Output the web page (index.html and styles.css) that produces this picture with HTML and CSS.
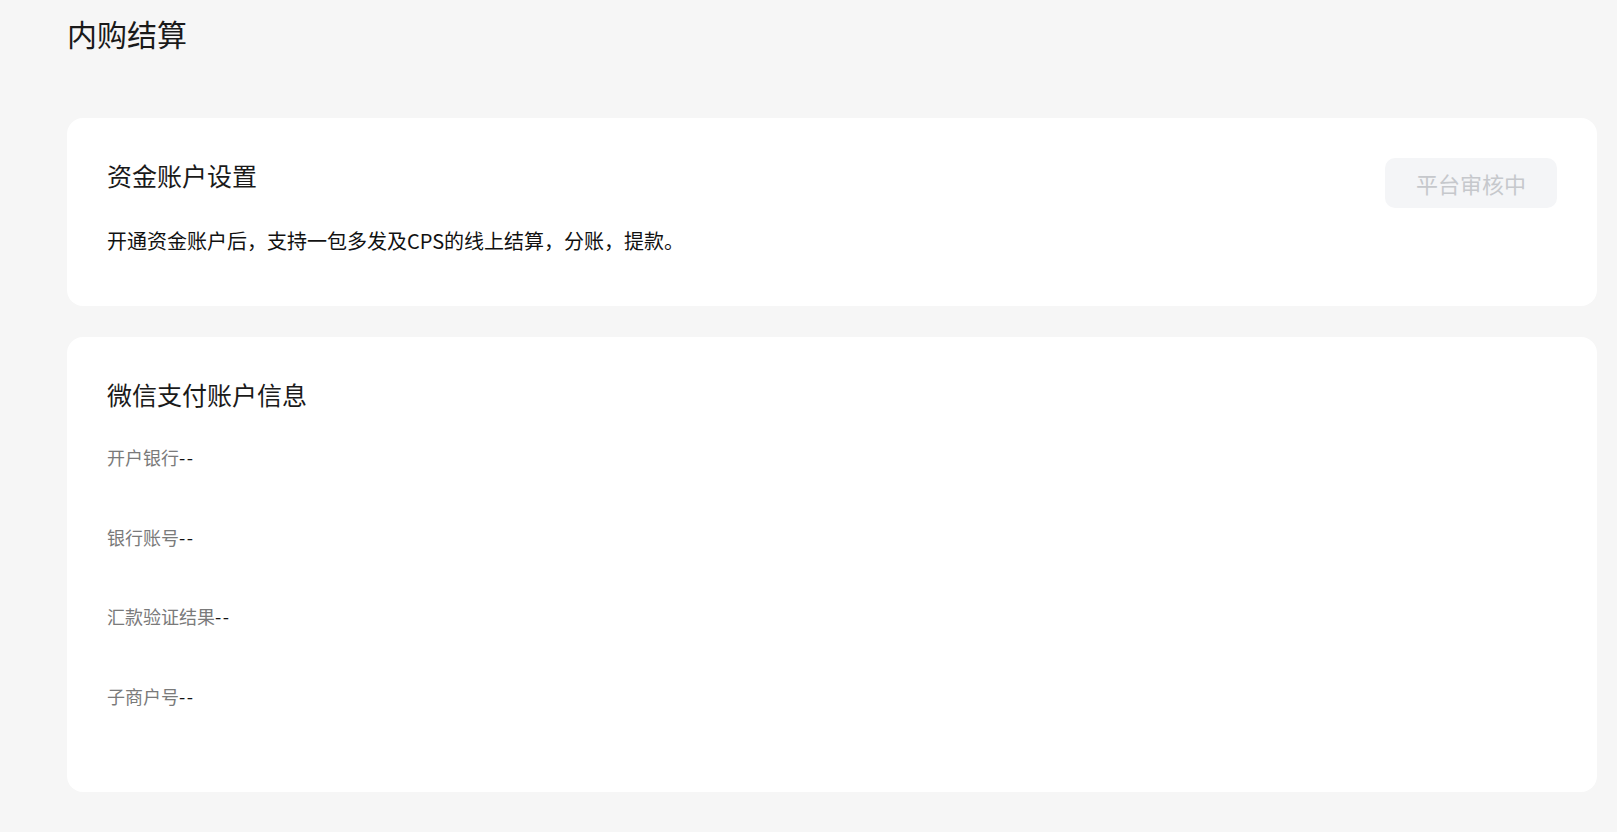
FILE: index.html
```html
<!DOCTYPE html>
<html lang="zh-CN">
<head>
<meta charset="utf-8">
<title>内购结算</title>
<link rel="stylesheet" href="styles.css">
</head>
<body>
<div class="page">
  <h1 class="page-title">内购结算</h1>

  <section class="card card-account">
    <div class="card-main">
      <h2 class="card-title">资金账户设置</h2>
      <p class="card-desc">开通资金账户后，支持一包多发及CPS的线上结算，分账，提款。</p>
    </div>
    <button class="btn-status" type="button" disabled>平台审核中</button>
  </section>

  <section class="card card-info">
    <h2 class="card-title">微信支付账户信息</h2>
    <ul class="info-list">
      <li class="info-row"><span class="info-label">开户银行</span><span class="info-value">--</span></li>
      <li class="info-row"><span class="info-label">银行账号</span><span class="info-value">--</span></li>
      <li class="info-row"><span class="info-label">汇款验证结果</span><span class="info-value">--</span></li>
      <li class="info-row"><span class="info-label">子商户号</span><span class="info-value">--</span></li>
    </ul>
  </section>
</div>
</body>
</html>
```

FILE: styles.css
```css
* {
  box-sizing: border-box;
}

html, body {
  margin: 0;
  padding: 0;
  background: #f6f6f6;
}

body {
  font-family: "Noto Sans CJK SC", "Noto Sans", sans-serif;
  color: #1a1a1a;
  width: 1617px;
  height: 832px;
  overflow: hidden;
}

.page {
  padding: 13px 20px 0 67px;
}

.page-title {
  margin: 0;
  font-size: 30px;
  line-height: 40px;
  font-weight: 400;
  color: #1a1a1a;
}

.card {
  background: #ffffff;
  border-radius: 16px;
  padding: 39px 40px;
}

.card-account {
  margin-top: 65px;
  display: flex;
  justify-content: space-between;
  align-items: flex-start;
  padding-bottom: 51px;
}

.card-title {
  margin: 0;
  font-size: 25px;
  line-height: 36px;
  font-weight: 400;
  color: #1a1a1a;
}

.card-desc {
  margin: 34px 0 0;
  font-size: 20px;
  line-height: 28px;
  color: #111111;
}

.btn-status {
  margin-top: 1px;
  width: 172px;
  height: 50px;
  border: none;
  border-radius: 10px;
  background: #f4f5f7;
  color: #c6c8cc;
  font-family: inherit;
  font-size: 22px;
  line-height: 50px;
  padding: 0;
  cursor: not-allowed;
}

.card-info {
  margin-top: 31px;
  padding-bottom: 84.5px;
}

.info-list {
  list-style: none;
  margin: 33px 0 0;
  padding: 0;
  display: flex;
  flex-direction: column;
  gap: 55.5px;
}

.info-row {
  font-size: 18px;
  line-height: 24px;
}

.info-label {
  color: #7a7a7a;
}

.info-value {
  color: #111111;
  letter-spacing: 1.5px;
}
```
